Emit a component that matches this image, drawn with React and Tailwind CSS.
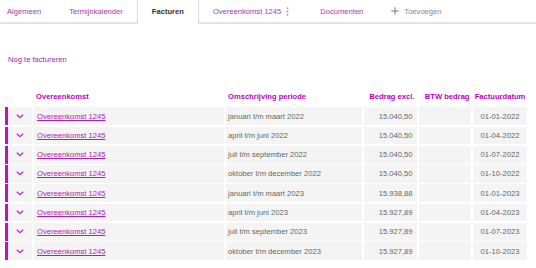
import React from "react";

const rows = [
  ["januari t/m maart 2022", "15.040,50", "01-01-2022"],
  ["april t/m juni 2022", "15.040,50", "01-04-2022"],
  ["juli t/m september 2022", "15.040,50", "01-07-2022"],
  ["oktober t/m december 2022", "15.040,50", "01-10-2022"],
  ["januari t/m maart 2023", "15.938,88", "01-01-2023"],
  ["april t/m juni 2023", "15.927,89", "01-04-2023"],
  ["juli t/m september 2023", "15.927,89", "01-07-2023"],
  ["oktober t/m december 2023", "15.927,89", "01-10-2023"],
];

function Chevron() {
  return (
    <svg width="8" height="5" viewBox="0 0 8 5">
      <polyline points="0.8,0.8 4,3.8 7.2,0.8" fill="none" stroke="#c020c0" strokeWidth="1.2" />
    </svg>
  );
}

function Tab({ children, active, first }) {
  if (active) {
    return (
      <div className="h-[24px] -mb-[2px] px-[14px] flex items-center bg-white border-x border-[#dcdcdc] text-[#333] font-bold">
        <span className="-mt-[2px]">{children}</span>
      </div>
    );
  }
  return (
    <div className={`h-[22px] flex items-center text-[#a03ab4] ${first ? "pl-[7px] pr-[14px]" : "px-[14px]"}`}>
      {children}
    </div>
  );
}

export default function App() {
  return (
    <div
      className="w-[536px] h-[268px] bg-white overflow-hidden text-[7.6px] leading-[9px]"
      style={{ fontFamily: '"Liberation Sans", Arial, sans-serif' }}
    >
      <div className="h-[24px] flex border-b-2 border-[#e4e4e4]">
        <Tab first>Algemeen</Tab>
        <Tab>Termijnkalender</Tab>
        <Tab active>Facturen</Tab>
        <Tab>
          <span>Overeenkomst 1245</span>
          <svg width="3" height="9" viewBox="0 0 3 9" className="ml-[5px]">
            <circle cx="1.5" cy="1.2" r="0.9" fill="#999" />
            <circle cx="1.5" cy="4.5" r="0.9" fill="#999" />
            <circle cx="1.5" cy="7.8" r="0.9" fill="#999" />
          </svg>
        </Tab>
        <div className="h-[22px] flex items-center text-[#a03ab4] pl-[17px] pr-[14px]">Documenten</div>
        <div className="h-[22px] flex items-center text-[#888] px-[14px]">
          <svg width="8" height="8" viewBox="0 0 8 8" className="mr-[5px]">
            <line x1="4" y1="0.3" x2="4" y2="7.7" stroke="#777" strokeWidth="1" />
            <line x1="0.3" y1="4" x2="7.7" y2="4" stroke="#777" strokeWidth="1" />
          </svg>
          Toevoegen
        </div>
      </div>

      <div className="pl-[8px] mt-[31px] text-[#b020b0]">Nog te factureren</div>

      <div className="mt-[24px] flex flex-col gap-[1.6px] pl-[5px]">
        <div className="flex h-[17.7px] items-center font-bold text-[#c000c0]">
          <div className="w-[3px]" />
          <div className="flex gap-[2px] h-full items-center">
            <div className="w-[24px]" />
            <div className="w-[190px] pl-[2px]">Overeenkomst</div>
            <div className="w-[136px] pl-[2px]">Omschrijving periode</div>
            <div className="w-[53px] text-right pr-[2.5px]">Bedrag excl.</div>
            <div className="w-[52px] text-right pr-[1.5px]">BTW bedrag</div>
            <div className="w-[54px] text-center">Factuurdatum</div>
          </div>
        </div>
        {rows.map(([period, amount, date], i) => (
          <div key={i} className="flex h-[17.7px]">
            <div className="w-[3px] h-full bg-[#c010c0]" />
            <div className="flex gap-[2px] h-full text-[#666]">
              <div className="w-[24px] bg-[#f4f4f4] flex items-center justify-center">
                <Chevron />
              </div>
              <div className="w-[190px] bg-[#f4f4f4] flex items-center pl-[3px]">
                <span className="text-[#b020b0] underline">Overeenkomst 1245</span>
              </div>
              <div className="w-[136px] bg-[#f4f4f4] flex items-center pl-[2px]">{period}</div>
              <div className="w-[53px] bg-[#f4f4f4] flex items-center justify-end pr-[4.5px]">{amount}</div>
              <div className="w-[52px] bg-[#f4f4f4]" />
              <div className="w-[54px] bg-[#f4f4f4] flex items-center justify-center">{date}</div>
            </div>
          </div>
        ))}
      </div>
    </div>
  );
}
